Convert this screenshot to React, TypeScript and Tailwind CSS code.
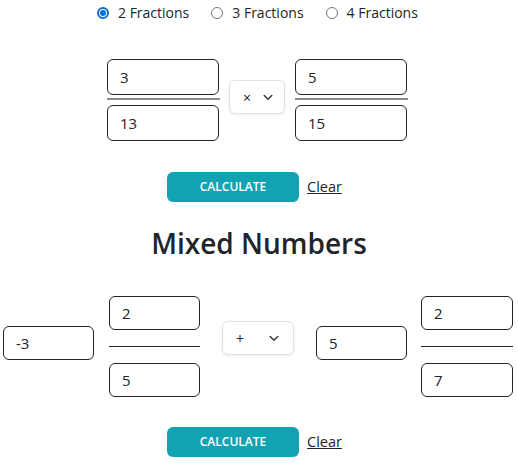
import React from "react";

const font = { fontFamily: '"Open Sans", "Noto Sans", sans-serif' };

function Radio({ checked, label }: { checked?: boolean; label: string }) {
  return (
    <label className="flex items-center gap-[9px] text-[14px] text-[#212529]">
      {checked ? (
        <span className="w-[12px] h-[12px] rounded-full border-[2px] border-[#0b6fd6] bg-white flex items-center justify-center">
          <span className="w-[6px] h-[6px] rounded-full bg-[#0b6fd6]" />
        </span>
      ) : (
        <span className="w-[12px] h-[12px] rounded-full border border-[#777] bg-white" />
      )}
      <span>{label}</span>
    </label>
  );
}

function Box({ value, w, h }: { value: string; w: string; h: string }) {
  return (
    <div
      className={`${w} ${h} border border-[#212529] rounded-[6px] flex items-center pl-[12px] text-[15px] text-[#212529] bg-white`}
    >
      {value}
    </div>
  );
}

function Chevron() {
  return (
    <svg width="12" height="12" viewBox="0 0 16 16" fill="none" stroke="#343a40" strokeWidth="2" strokeLinecap="round" strokeLinejoin="round">
      <path d="M3 6l5 5 5-5" />
    </svg>
  );
}

function Select({ op, w, gap }: { op: string; w: string; gap: string }) {
  return (
    <div
      className={`${w} h-[34px] border border-[#dee2e6] rounded-[6px] bg-white shadow-[0_1px_3px_rgba(0,0,0,0.08)] flex items-center pl-[13px] ${gap} text-[14px] text-[#212529]`}
    >
      <span>{op}</span>
      <Chevron />
    </div>
  );
}

function Buttons() {
  return (
    <div className="flex items-center pl-[167px] gap-[8px]">
      <button className="w-[132px] h-[30px] rounded-[6px] bg-[#12a3b2] text-white text-[12px] font-semibold">
        CALCULATE
      </button>
      <span className="text-[14.5px] text-[#212529] underline">Clear</span>
    </div>
  );
}

export default function App() {
  return (
    <div style={font} className="w-[518px] h-[465px] bg-white overflow-hidden">
      <div className="h-[25px] flex items-center pl-[97px] gap-[22px]">
        <Radio checked label="2 Fractions" />
        <Radio label="3 Fractions" />
        <Radio label="4 Fractions" />
      </div>

      <div className="mt-[34px] flex items-center pl-[107px]">
        <div className="w-[113px] flex flex-col">
          <Box value="3" w="w-[112px]" h="h-[36px]" />
          <div className="mt-[3px] h-[2px] bg-[#8a8a8a]" />
          <div className="mt-[5px]">
            <Box value="13" w="w-[112px]" h="h-[36px]" />
          </div>
        </div>
        <div className="ml-[9px] mr-[10px] mb-[6px]">
          <Select op="×" w="w-[56px]" gap="gap-[11px]" />
        </div>
        <div className="w-[113px] flex flex-col">
          <Box value="5" w="w-[112px]" h="h-[36px]" />
          <div className="mt-[3px] h-[2px] bg-[#8a8a8a]" />
          <div className="mt-[5px]">
            <Box value="15" w="w-[112px]" h="h-[36px]" />
          </div>
        </div>
      </div>

      <div className="mt-[31px]">
        <Buttons />
      </div>

      <h2 className="mt-[21px] text-center text-[28px] font-semibold text-[#212529] leading-[40px]">
        Mixed Numbers
      </h2>

      <div className="mt-[33px] flex items-start pl-[3px]">
        <div className="mt-[30px]">
          <Box value="-3" w="w-[91px]" h="h-[34px]" />
        </div>
        <div className="ml-[15px] w-[91px] flex flex-col">
          <Box value="2" w="w-[91px]" h="h-[34px]" />
          <div className="mt-[16px] h-[1px] bg-[#212529]" />
          <div className="mt-[16px]">
            <Box value="5" w="w-[91px]" h="h-[34px]" />
          </div>
        </div>
        <div className="ml-[22px] mt-[25px]">
          <Select op="+" w="w-[72px]" gap="gap-[24px]" />
        </div>
        <div className="ml-[22px] mt-[30px]">
          <Box value="5" w="w-[91px]" h="h-[34px]" />
        </div>
        <div className="ml-[14px] w-[92px] flex flex-col">
          <Box value="2" w="w-[92px]" h="h-[34px]" />
          <div className="mt-[16px] h-[1px] bg-[#212529]" />
          <div className="mt-[16px]">
            <Box value="7" w="w-[92px]" h="h-[34px]" />
          </div>
        </div>
      </div>

      <div className="mt-[30px]">
        <Buttons />
      </div>
    </div>
  );
}
